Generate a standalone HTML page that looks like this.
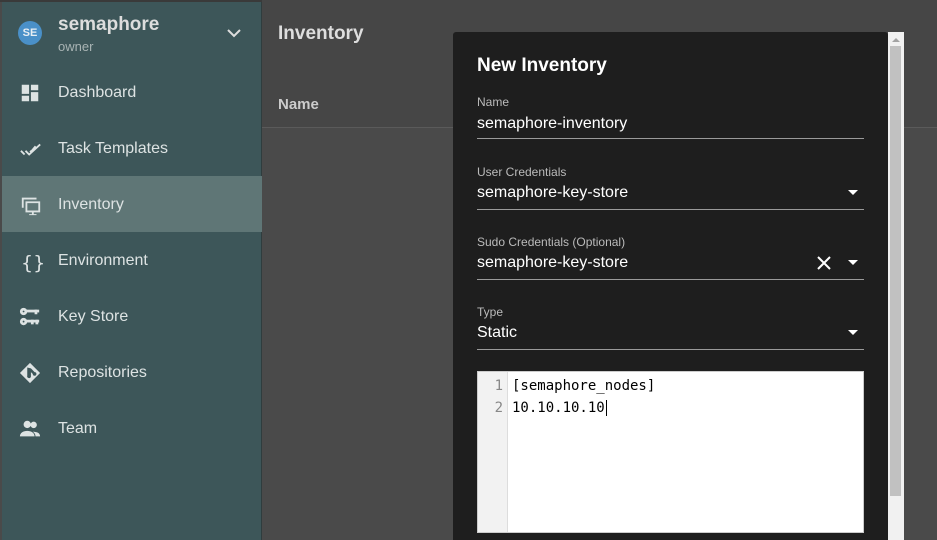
<!DOCTYPE html>
<html><head><meta charset="utf-8"><style>
*{margin:0;padding:0;box-sizing:border-box}
body{width:937px;height:540px;overflow:hidden;background:#4a4a4a;font-family:"Liberation Sans",sans-serif;position:relative}
.top{position:absolute;left:0;top:0;width:937px;height:2px;background:#3a3a3a}
.sb{position:absolute;left:2px;top:2px;width:260px;height:538px;background:#3d5659;border-right:1px solid #2f3d3e}
.hdr{position:absolute;left:262px;top:0;width:675px;height:128px;background:#464646;border-bottom:1px solid #5a5a5a}
.av{position:absolute;left:18px;top:21px;width:24px;height:24px;border-radius:50%;background:#4a90c8;color:#e8eef3;font-size:11px;font-weight:bold;text-align:center;line-height:24px}
.nm{position:absolute;left:58px;top:14px;color:#ddd;font-size:19px;font-weight:bold}
.ow{position:absolute;left:58px;top:39px;color:#a9b4b4;font-size:13px}
.item{position:absolute;left:2px;width:260px;height:56px;color:#dde3e3;font-size:16px}
.item span{position:absolute;left:56px;top:20px}
.item svg{position:absolute;left:17px;top:18px}
.act{background:#5f7676}
.dlg{position:absolute;left:453px;top:32px;width:435px;height:508px;background:#1e1e1e;border-radius:3px 3px 0 0}
.ttl{position:absolute;left:24px;top:23px;color:#fff;font-size:19px;font-weight:bold}
.f{position:absolute;left:24px;width:387px;border-bottom:1px solid #9a9a9a;height:48px}
.f .l{position:absolute;top:1px;color:#bbb;font-size:12px}
.f .v{position:absolute;top:20px;color:#fff;font-size:16px}
.arr{position:absolute;right:6px;top:26px;width:0;height:0;border-left:5px solid transparent;border-right:5px solid transparent;border-top:5px solid #fff}
.ed{position:absolute;left:24px;top:339px;width:387px;height:162px;background:#fff;border:1px solid #ccc}
.gut{position:absolute;left:0;top:0;width:30px;height:100%;background:#f2f2f2;border-right:1px solid #ddd}
.ln{position:absolute;right:4px;color:#888;font-family:"DejaVu Sans Mono",monospace;font-size:14px}
.code{position:absolute;left:34px;color:#000;font-family:"DejaVu Sans Mono",monospace;font-size:14px}
</style></head><body>
<div class="top"></div>
<div class="hdr"><div style="position:absolute;left:16px;top:23px;color:#ddd;font-size:19px;font-weight:bold">Inventory</div>
<div style="position:absolute;left:16px;top:96px;color:#ccc;font-size:15px;font-weight:bold">Name</div></div>
<div class="sb"></div>
<div class="av">SE</div><div class="nm">semaphore</div><div class="ow">owner</div>
<svg style="position:absolute;left:227px;top:28px" width="14" height="10"><path d="M1 2l6 6 6-6" stroke="#ddd" stroke-width="2" fill="none"/></svg>
<div class="item" style="top:64px"><svg width="22" height="22" viewBox="0 0 24 24"><path fill="#dde3e3" d="M3 13h8V3H3zm0 8h8v-6H3zm10 0h8V11h-8zm0-18v6h8V3z"/></svg><span>Dashboard</span></div>
<div class="item" style="top:120px"><svg width="24" height="22" viewBox="0 0 24 24"><path fill="none" stroke="#dde3e3" stroke-width="2" d="M1 14l4 4M6 14l4 4L22 7M11 14l1 1L17 9" /></svg><span>Task Templates</span></div>
<div class="item act" style="top:176px"><svg width="24" height="22" viewBox="0 0 24 24"><path fill="#dde3e3" d="M2 4h16v2H4v9H2zM6 8h16v12h-7v2h3v1H10v-1h3v-2H6zm2 2v8h12v-8z"/></svg><span>Inventory</span></div>
<div class="item" style="top:232px"><svg width="24" height="24" viewBox="0 0 24 24"><text x="2" y="19" fill="#dde3e3" font-size="19" font-family="DejaVu Sans">{}</text></svg><span>Environment</span></div>
<div class="item" style="top:288px"><svg width="22" height="22" viewBox="0 0 24 24"><g fill="none" stroke="#dde3e3" stroke-width="3"><circle cx="5" cy="6" r="2.5"/><circle cx="5" cy="17" r="2.5"/></g><g fill="#dde3e3"><rect x="8" y="4" width="14" height="3"/><rect x="17" y="4" width="3" height="5"/><rect x="8" y="15" width="14" height="3"/><rect x="13" y="15" width="3" height="5"/><rect x="18" y="15" width="3" height="5"/></g></svg><span>Key Store</span></div>
<div class="item" style="top:344px"><svg width="22" height="22" viewBox="0 0 24 24"><path fill="#dde3e3" d="M12 1l11 11-11 11L1 12zM9 6v9a2 2 0 104 1V11l2 2a2 2 0 102-2l-4-4-4-1z"/></svg><span>Repositories</span></div>
<div class="item" style="top:400px"><svg width="22" height="22" viewBox="0 0 24 24"><path fill="#dde3e3" d="M9 11a4 4 0 100-8 4 4 0 000 8zm7 0a3.5 3.5 0 100-7 3.5 3.5 0 000 7zM1 20c0-4 4-6 8-6s8 2 8 6zm17 0c0-2-1-4-3-5 4 0 8 1 8 5z"/></svg><span>Team</span></div>
<div class="dlg">
<div class="ttl">New Inventory</div>
<div class="f" style="top:62px;height:45px"><div class="l">Name</div><div class="v" style="top:21px">semaphore-inventory</div></div>
<div class="f" style="top:132px;height:46px"><div class="l">User Credentials</div><div class="v">semaphore-key-store</div><div class="arr"></div></div>
<div class="f" style="top:202px;height:46px"><div class="l">Sudo Credentials (Optional)</div><div class="v">semaphore-key-store</div>
<svg style="position:absolute;right:33px;top:22px" width="14" height="14"><path d="M1 1l12 12M13 1L1 13" stroke="#fff" stroke-width="2"/></svg><div class="arr"></div></div>
<div class="f" style="top:272px;height:46px"><div class="l">Type</div><div class="v">Static</div><div class="arr"></div></div>
<div class="ed"><div class="gut"><div class="ln" style="top:6px">1</div><div class="ln" style="top:28px">2</div></div>
<div class="code" style="top:6px">[semaphore_nodes]</div><div class="code" style="top:28px">10.10.10.10<span style="border-left:1px solid #000;margin-left:1px"></span></div></div>
</div>
<div style="position:absolute;left:888px;top:32px;width:16px;height:508px;background:#f1f1f1"></div>
<div style="position:absolute;left:890px;top:46px;width:11px;height:450px;background:#c1c1c1"></div>
<svg style="position:absolute;left:891px;top:37px" width="10" height="6"><path d="M1 5l4-4 4 4z" fill="#a3a3a3"/></svg>
</body></html>
